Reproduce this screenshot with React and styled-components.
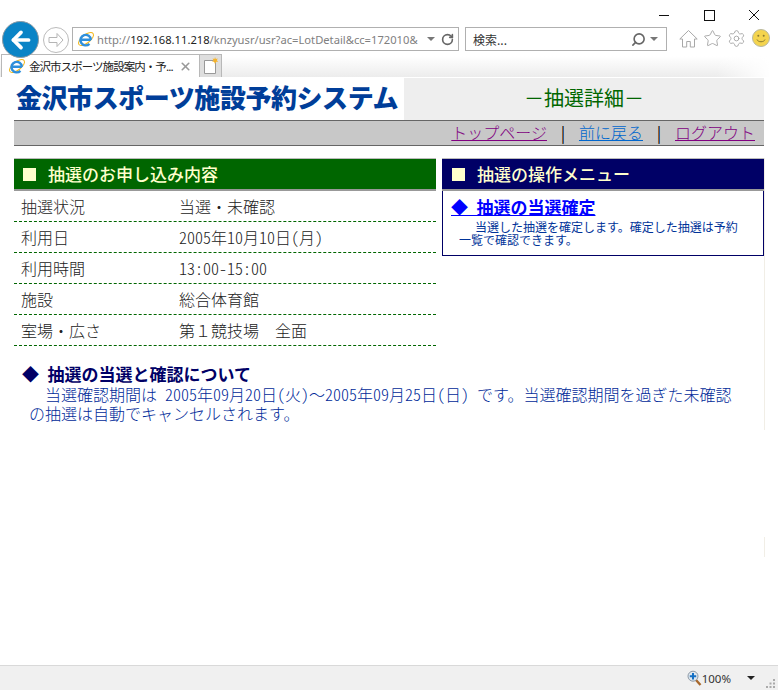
import React from 'react'
import styled, { createGlobalStyle } from 'styled-components'
import { ArrowLeft, RotateCw, Search, Settings, Star, X } from 'lucide-react'

const Global = createGlobalStyle`
  html, body { margin: 0; padding: 0; background: #fff; }
  body { font-family: "Noto Sans CJK JP", "Noto Sans", sans-serif; font-feature-settings: "hwid" 1; }
`

const Window = styled.div`
  width: 778px;
  height: 690px;
  display: flex;
  flex-direction: column;
  overflow: hidden;
  background: #fff;
`
const Controls = styled.div`
  height: 27px;
  flex: none;
  display: flex;
  justify-content: flex-end;
  align-items: flex-start;
  padding: 7px 16px 0 0;
  box-sizing: border-box;
  gap: 29px;
  color: #111;
`
const Toolbar = styled.div`
  height: 27px;
  flex: none;
  display: flex;
  align-items: flex-start;
  padding-left: 2px;
`
const BackButton = styled.div`
  width: 37px;
  height: 37px;
  margin-top: -6px;
  flex: none;
  border-radius: 50%;
  background: #0a84c6;
  border: 1px solid #8a9aa5;
  box-sizing: border-box;
  display: flex;
  align-items: center;
  justify-content: center;
  color: #fff;
  position: relative;
  z-index: 2;
`
const ForwardButton = styled.div`
  width: 26px;
  height: 26px;
  flex: none;
  margin: 0 3px 0 4px;
  border-radius: 50%;
  border: 1px solid #bbb;
  box-sizing: border-box;
  display: flex;
  align-items: center;
  justify-content: center;
`
const Field = styled.div`
  height: 24px;
  box-sizing: border-box;
  width: ${p => p.$w}px;
  flex: none;
  margin-right: ${p => p.$mr || 0}px;
  border: 1px solid #b0b0b0;
  display: flex;
  align-items: center;
  padding: 0 ${p => p.$pr || 3}px 0 4px;
  color: #666;
  background: #fff;
`
const Url = styled.div`
  flex: 1;
  min-width: 0;
  margin-left: 2px;
  font-family: "Noto Sans", sans-serif;
  font-size: 11.2px;
  color: #808080;
  white-space: nowrap;
  b { font-weight: 400; color: #222; }
`
const SearchText = styled.div`
  flex: 1;
  margin-left: 3px;
  font-size: 12px;
  font-feature-settings: normal;
  color: #333;
`
const ToolIcons = styled.div`
  display: flex;
  align-items: center;
  gap: 5px;
  margin: 1px 0 0 12px;
  color: #a8a8a8;
`
const TabRow = styled.div`
  height: 24px;
  flex: none;
  box-sizing: border-box;
  border-bottom: 1px solid #fff;
  display: flex;
  align-items: stretch;
  padding-left: 1px;
  background:
    linear-gradient(to right, rgba(255, 255, 255, 0) 92%, #fff 99%),
    linear-gradient(to bottom, #fff, #fff 10%, #ececec);
`
const Tab = styled.div`
  width: 199px;
  box-sizing: border-box;
  border: 1px solid #b8b8b8;
  border-bottom: 0;
  background: #fff;
  display: flex;
  align-items: center;
  gap: 3px;
  padding: 0 7px 0 6px;
  font-size: 11.5px;
  font-feature-settings: normal;
  letter-spacing: -0.95px;
  color: #222;
  white-space: nowrap;
`
const TabTitle = styled.span`
  flex: 1;
`
const NewTab = styled.div`
  width: 22px;
  box-sizing: border-box;
  border: 1px solid #b8b8b8;
  border-left: 0;
  border-bottom: 0;
  background: #dedede;
  display: flex;
  align-items: center;
  justify-content: center;
`
const Page = styled.main`
  flex: 1;
  min-height: 0;
  padding: 0 14px;
  background:
    linear-gradient(#f1eee6, #f1eee6) no-repeat 764px 80px / 1px 272px,
    linear-gradient(#f1eee6, #f1eee6) no-repeat 764px 459px / 1px 20px;
`
const Banner = styled.header`
  height: 42px;
  display: flex;
  align-items: stretch;
`
const Logo = styled.div`
  width: 390px;
  flex: none;
  box-sizing: border-box;
  padding-left: 2px;
  font-size: 26px;
  font-weight: 900;
  line-height: 38px;
  letter-spacing: -0.45px;
  color: #003e99;
  white-space: nowrap;
`
const PageTitle = styled.h1`
  flex: 1;
  margin: 0;
  background: #eeeeee;
  color: #006600;
  font-size: 20px;
  font-weight: 400;
  font-feature-settings: normal;
  line-height: 40px;
  text-align: center;
`
const Nav = styled.nav`
  height: 26px;
  box-sizing: border-box;
  border-top: 1px solid #666;
  border-bottom: 1px solid #666;
  background: #c8c8c8;
  display: flex;
  justify-content: flex-end;
  align-items: center;
  padding: 0 9px 2px 0;
  font-size: 16px;
  font-weight: 300;
`
const NavLink = styled.a.attrs({ href: '#' })`
  color: ${p => (p.$visited ? '#800080' : '#0066cc')};
  line-height: 22px;
`
const Sep = styled.span`
  width: 32px;
  text-align: center;
  font-weight: 400;
  color: #000;
`
const Panels = styled.div`
  display: flex;
  gap: 6px;
  margin-top: 12px;
  align-items: flex-start;
`
const Left = styled.section`
  width: 422px;
  flex: none;
`
const Right = styled.section`
  width: 322px;
  flex: none;
`
const PanelHead = styled.h2`
  margin: 0;
  height: 33px;
  box-sizing: border-box;
  border-top: 1px solid #bbb;
  border-bottom: 2px solid #999;
  background: ${p => p.$bg};
  color: #ffffcc;
  font-size: 17px;
  font-weight: 500;
  line-height: 30px;
  display: flex;
  align-items: center;
  padding-left: ${p => p.$pad}px;
  gap: ${p => p.$gap}px;
`
const Bullet = styled.span`
  width: 13px;
  height: 13px;
  flex: none;
  background: #ffffcc;
`
const Row = styled.div`
  height: 31px;
  box-sizing: border-box;
  border-bottom: 1px dashed #006600;
  display: flex;
  align-items: center;
  padding: 0 0 1px 7px;
  font-size: 16px;
  font-weight: 300;
  color: #222;
`
const Label = styled.span`
  width: 158px;
  flex: none;
`
const Wide = styled.span`
  font-feature-settings: normal;
`
const MenuBox = styled.div`
  height: 65px;
  box-sizing: border-box;
  border: 1px solid #000066;
  border-top: 0;
  padding: 4px 24px 0 8px;
`
const MenuLink = styled.a.attrs({ href: '#' })`
  display: block;
  font-size: 17px;
  font-weight: 700;
  line-height: 24px;
  color: #0000ff;
  white-space: pre;
`
const MenuText = styled.p`
  margin: 1px 0 0;
  padding-left: 8px;
  font-size: 12px;
  line-height: 13px;
  color: #003399;
  text-indent: 16px;
`
const Note = styled.section`
  margin-top: 17px;
  padding-left: 8px;
  width: 716px;
`
const NoteTitle = styled.h3`
  margin: 0;
  font-size: 17px;
  font-weight: 700;
  line-height: 22px;
  color: #000066;
  white-space: pre;
`
const NoteText = styled.p`
  margin: 0;
  padding-left: 7px;
  font-size: 16px;
  font-weight: 300;
  line-height: 19px;
  color: #002a99;
  text-indent: 16px;
`
const StatusBar = styled.footer`
  height: 25px;
  flex: none;
  box-sizing: border-box;
  border-top: 1px solid #d9d9d9;
  background: #f0f0f0;
  display: flex;
  align-items: center;
  justify-content: flex-end;
  padding-right: 23px;
  font-family: "Noto Sans", sans-serif;
  font-size: 11.5px;
  color: #333;
`
const Zoom = styled.span`
  margin: 0 16px 0 0;
`

const WinIcon = ({ d }) => (
  <svg width="16" height="16" viewBox="0 0 16 16">
    <path d={d} fill="none" stroke="#111" shapeRendering="crispEdges" />
  </svg>
)

const Caret = ({ w = 8, fill = '#777', ml = 0 }) => (
  <svg width={w} height={w / 2} viewBox="0 0 8 4" style={{ flex: 'none', marginLeft: ml }}>
    <path d="M0 0h8L4 4z" fill={fill} />
  </svg>
)

const IeLogo = ({ size = 18 }) => (
  <svg width={size} height={size} viewBox="0 0 24 24" style={{ flex: 'none' }}>
    <ellipse cx="12" cy="12" rx="12" ry="5.5" transform="rotate(-38 12 12)" fill="none" stroke="#f2b81c" strokeWidth="1.4" />
    <path d="M5.5 13h13M18.6 13a7 7 0 1 0-2 5.4" fill="none" stroke="#2e8fdc" strokeWidth="3.2" />
  </svg>
)

const ForwardArrow = () => (
  <svg width="18" height="18" viewBox="0 0 18 18">
    <path d="M10 2.5L16 9l-6 6.5v-4H2v-5h8z" fill="none" stroke="#b5b5b5" />
  </svg>
)

const HomeIcon = () => (
  <svg width="19" height="19" viewBox="0 0 19 19">
    <path d="M9.5 1.5L.8 10h2.7v8h4.2v-5.5h3.6V18h4.2v-8h2.7z" fill="#fff" stroke="#a8a8a8" />
  </svg>
)

const Smile = () => (
  <svg width="20" height="20" viewBox="0 0 20 20">
    <circle cx="10" cy="10" r="8.5" fill="#f4d44e" stroke="#b9b9a0" />
    <circle cx="7.3" cy="7.8" r="1" fill="#8a7a30" />
    <circle cx="12.7" cy="7.8" r="1" fill="#8a7a30" />
    <path d="M6 11.5c1 3 7 3 8 0" fill="none" stroke="#8a7a30" />
  </svg>
)

const NewTabIcon = () => (
  <svg width="16" height="18" viewBox="0 0 16 18">
    <path d="M1.5 3.5h9l2 2v11h-11z" fill="#fff" stroke="#999" />
    <path d="M12 0l.8 2 2-.5-1 1.8 1.4 1.4-2 .1L12 7l-.9-2.2-2-.1 1.4-1.4-1-1.8 2 .5z" fill="#f5b32a" />
  </svg>
)

const ZoomIcon = () => (
  <svg width="15" height="16" viewBox="0 0 15 16">
    <path d="M9 10l4.5 5" stroke="#a8682c" strokeWidth="2.4" />
    <circle cx="6" cy="6.2" r="5" fill="#dfe7ee" stroke="#8b98a5" />
    <path d="M6 3v6.4M2.8 6.2h6.4" stroke="#1570c4" strokeWidth="2" />
  </svg>
)

const Grip = () => (
  <svg width="10" height="10" viewBox="0 0 10 10" fill="#aaa" style={{ marginLeft: 11, marginRight: -21, alignSelf: 'flex-end', marginBottom: 1 }}>
    <rect x="7" y="0" width="2" height="2" />
    <rect x="3.5" y="3.5" width="2" height="2" />
    <rect x="7" y="3.5" width="2" height="2" />
    <rect x="0" y="7" width="2" height="2" />
    <rect x="3.5" y="7" width="2" height="2" />
    <rect x="7" y="7" width="2" height="2" />
  </svg>
)

const rows = [
  ['抽選状況', '当選・未確認'],
  ['利用日', '2005年10月10日(月)'],
  ['利用時間', '13:00-15:00'],
  ['施設', '総合体育館'],
  ['室場・広さ', <Wide>第１競技場　全面</Wide>],
]

export default function App() {
  return (
    <Window>
      <Global />
      <Controls>
        <WinIcon d="M3 8.5h10" />
        <WinIcon d="M3.5 3.5h10v10h-10z" />
        <WinIcon d="M3 3l10 10M13 3L3 13" />
      </Controls>
      <Toolbar>
        <BackButton><ArrowLeft size={26} strokeWidth={3.4} /></BackButton>
        <ForwardButton><ForwardArrow /></ForwardButton>
        <Field $w={387} $mr={6}>
          <IeLogo />
          <Url>http://<b>192.168.11.218</b>/knzyusr/usr?ac=LotDetail&amp;cc=172010&amp;</Url>
          <Caret />
          <RotateCw size={13} strokeWidth={3} style={{ margin: '0 1px 0 6px' }} />
        </Field>
        <Field $w={202} $pr={8}>
          <SearchText>検索...</SearchText>
          <Search size={15} strokeWidth={2.6} style={{ transform: 'scaleX(-1)' }} />
          <Caret ml={4} />
        </Field>
        <ToolIcons>
          <HomeIcon />
          <Star size={19} strokeWidth={1.2} />
          <Settings size={19} strokeWidth={1.2} />
          <Smile />
        </ToolIcons>
      </Toolbar>
      <TabRow>
        <Tab>
          <IeLogo />
          <TabTitle>金沢市スポーツ施設案内・予...</TabTitle>
          <X size={13} strokeWidth={3} color="#999" style={{ flex: 'none' }} />
        </Tab>
        <NewTab><NewTabIcon /></NewTab>
      </TabRow>
      <Page>
        <Banner>
          <Logo>金沢市スポーツ施設予約システム</Logo>
          <PageTitle>－抽選詳細－</PageTitle>
        </Banner>
        <Nav>
          <NavLink $visited>トップページ</NavLink>
          <Sep>|</Sep>
          <NavLink>前に戻る</NavLink>
          <Sep>|</Sep>
          <NavLink $visited>ログアウト</NavLink>
        </Nav>
        <Panels>
          <Left>
            <PanelHead $bg="#006600" $pad={9} $gap={12}><Bullet />抽選のお申し込み内容</PanelHead>
            {rows.map(([k, v]) => (
              <Row key={k}><Label>{k}</Label><span>{v}</span></Row>
            ))}
          </Left>
          <Right>
            <PanelHead $bg="#000066" $pad={10} $gap={12}><Bullet />抽選の操作メニュー</PanelHead>
            <MenuBox>
              <MenuLink>◆ 抽選の当選確定</MenuLink>
              <MenuText>当選した抽選を確定します。確定した抽選は予約一覧で確認できます。</MenuText>
            </MenuBox>
          </Right>
        </Panels>
        <Note>
          <NoteTitle>◆ 抽選の当選と確認について</NoteTitle>
          <NoteText>当選確認期間は 2005年09月20日(火)<Wide>～</Wide>2005年09月25日(日) です。当選確認期間を過ぎた未確認の抽選は自動でキャンセルされます。</NoteText>
        </Note>
      </Page>
      <StatusBar>
        <ZoomIcon />
        <Zoom>100%</Zoom>
        <Caret w={8} fill="#222" />
        <Grip />
      </StatusBar>
    </Window>
  )
}
